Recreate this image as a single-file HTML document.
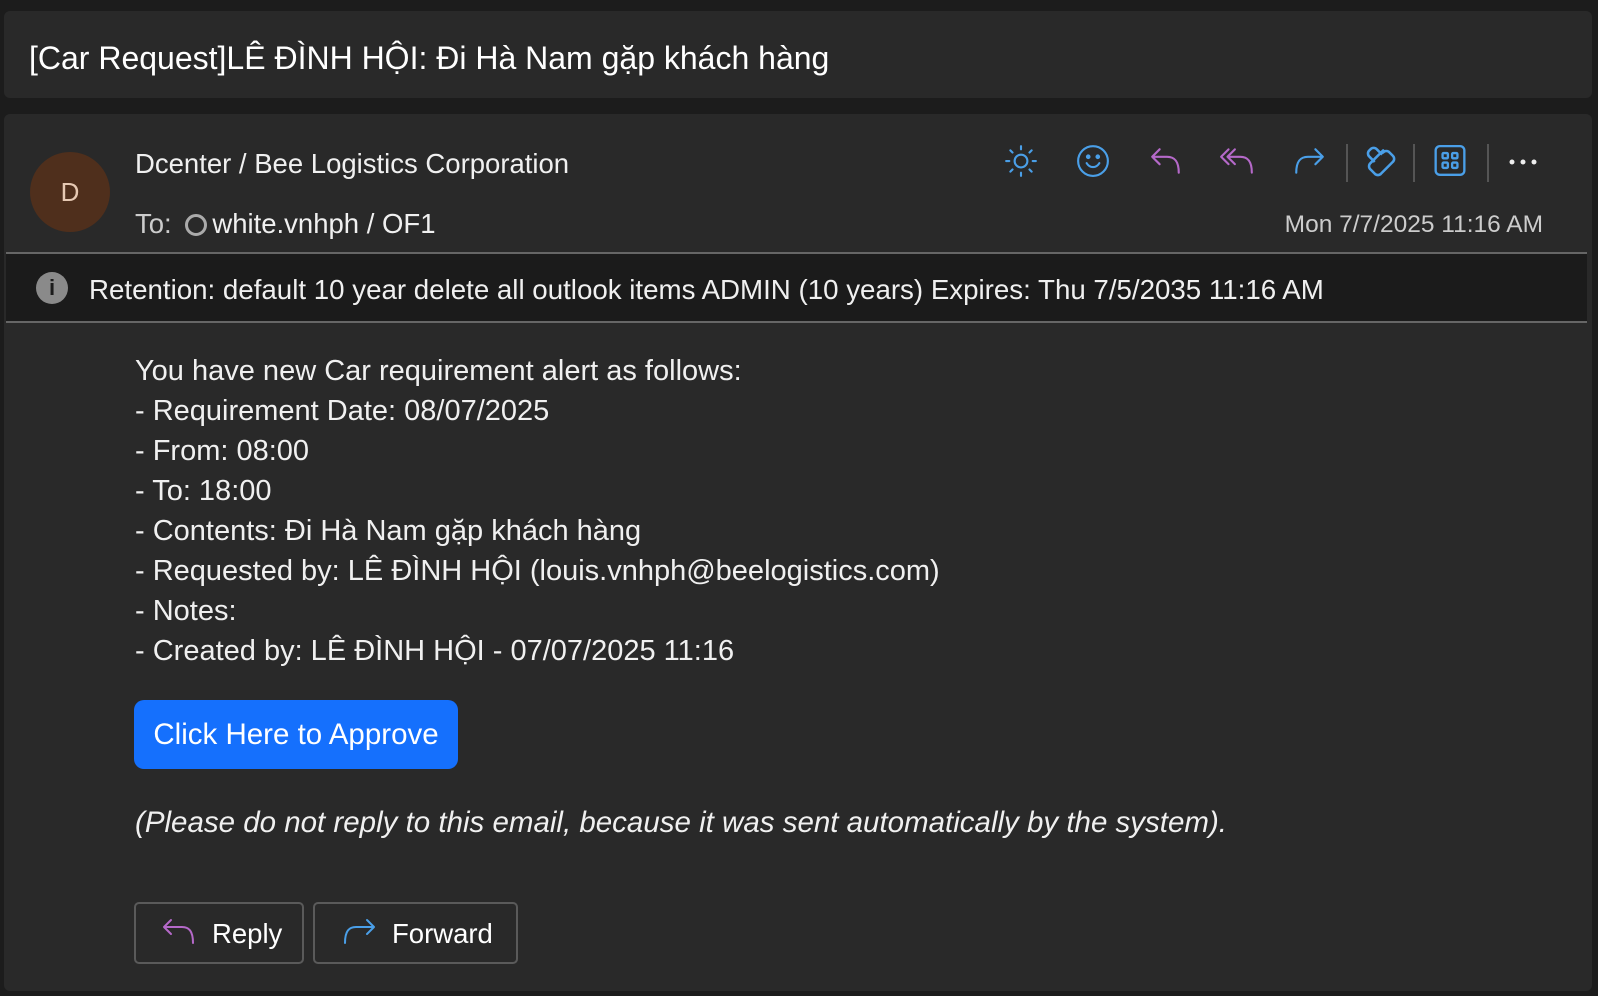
<!DOCTYPE html>
<html><head><meta charset="utf-8"><style>
*{margin:0;padding:0;box-sizing:border-box}
body{width:1598px;height:996px;background:#1c1c1c;font-family:"Liberation Sans",sans-serif;color:#fff;position:relative;overflow:hidden}
.card{position:absolute;background:#292929;border-radius:6px}
.abs{position:absolute;white-space:nowrap}
.ic{position:absolute;top:144px}
</style></head><body>
<div class="card" style="left:4px;top:11px;width:1588px;height:87px"></div>
<div class="abs" style="left:29px;top:38px;font-size:32px;line-height:40px">[Car Request]LÊ ĐÌNH HỘI: Đi Hà Nam gặp khách hàng</div>
<div class="card" style="left:4px;top:114px;width:1588px;height:877px"></div>
<div class="abs" style="left:30px;top:152px;width:80px;height:80px;border-radius:50%;background:#4f2f1c;color:#e6c9b3;font-size:26px;text-align:center;line-height:80px">D</div>
<div class="abs" style="left:135px;top:148px;font-size:27.5px;line-height:32px;color:#f0f0f0">Dcenter / Bee Logistics Corporation</div>
<div class="abs" style="left:135px;top:208px;font-size:27.5px;line-height:32px;color:#ccc">To: <span style="display:inline-block;width:22px;height:22px;border:3px solid #aaa;border-radius:50%;vertical-align:-3px;margin:0 5px 0 6px"></span><span style="color:#f0f0f0">white.vnhph / OF1</span></div>
<div class="abs" style="right:55px;top:211px;font-size:24.5px;line-height:28px;color:#ccc">Mon 7/7/2025 11:16 AM</div>
<svg class="ic" style="left:1004px" width="34" height="34" viewBox="0 0 32 32" fill="none" stroke="#4a9fe8" stroke-width="2" stroke-linecap="round"><circle cx="16" cy="16" r="6"/><path d="M16 2v3M16 27v3M2 16h3M27 16h3M6 6l2 2M24 24l2 2M6 26l2-2M24 8l2-2"/></svg>
<svg class="ic" style="left:1076px" width="34" height="34" viewBox="0 0 32 32" fill="none" stroke="#4a9fe8" stroke-width="2" stroke-linecap="round"><circle cx="16" cy="16" r="14"/><path d="M10 18c3 5 9 5 12 0"/><circle cx="11.5" cy="12" r="1.2" fill="#4a9fe8"/><circle cx="20.5" cy="12" r="1.2" fill="#4a9fe8"/></svg>
<svg class="ic" style="left:1149px" width="34" height="34" viewBox="0 0 32 32" fill="none" stroke="#b569c9" stroke-width="2" stroke-linecap="round" stroke-linejoin="round"><path d="M10 5l-7 7 7 7M3 12h14c7 0 11 4 11 15"/></svg>
<svg class="ic" style="left:1219px" width="36" height="34" viewBox="0 0 34 32" fill="none" stroke="#b569c9" stroke-width="2" stroke-linecap="round" stroke-linejoin="round"><path d="M9 5l-7 7 7 7M15 5l-7 7 7 7M8 12h12c7 0 11 4 11 15"/></svg>
<svg class="ic" style="left:1292px" width="34" height="34" viewBox="0 0 32 32" fill="none" stroke="#4a9fe8" stroke-width="2" stroke-linecap="round" stroke-linejoin="round"><path d="M22 5l7 7-7 7M29 12H15C8 12 4 16 4 27"/></svg>
<div class="abs" style="left:1346px;top:144px;width:2px;height:38px;background:#555"></div>
<svg class="ic" style="left:1362px" width="36" height="36" viewBox="0 0 34 34" fill="none" stroke="#4a9fe8" stroke-width="2.4" stroke-linejoin="round"><path d="M20 6l-12 12a4 4 0 0 0 0 6l4 4a4 4 0 0 0 6 0l11-11a4 4 0 0 0 0-6l-3-3a4 4 0 0 0-6 0zM12 17l-5-5a4 4 0 0 1 0-6l1-1a4 4 0 0 1 6 0l5 5"/></svg>
<div class="abs" style="left:1413px;top:144px;width:2px;height:38px;background:#555"></div>
<svg class="ic" style="left:1434px" width="32" height="34" viewBox="0 0 30 32" fill="none" stroke="#4a9fe8" stroke-width="2.2"><rect x="1.5" y="2" width="27" height="27" rx="4"/><rect x="8" y="8.5" width="5" height="5" rx="1"/><rect x="17" y="8.5" width="5" height="5" rx="1"/><rect x="8" y="17.5" width="5" height="5" rx="1"/><rect x="17" y="17.5" width="5" height="5" rx="1"/></svg>
<div class="abs" style="left:1487px;top:144px;width:2px;height:38px;background:#555"></div>
<svg class="abs" style="left:1509px;top:158px" width="28" height="8" viewBox="0 0 28 8" fill="#eee"><circle cx="3" cy="4" r="2.5"/><circle cx="14" cy="4" r="2.5"/><circle cx="25" cy="4" r="2.5"/></svg>
<div class="abs" style="left:6px;top:252px;width:1581px;height:71px;background:#1b1b1b;border-top:2px solid #666;border-bottom:2px solid #666"></div>
<div class="abs" style="left:36px;top:272px;width:32px;height:32px;border-radius:50%;background:#8a8a8a;color:#1b1b1b;font-weight:bold;font-size:22px;text-align:center;line-height:32px">i</div>
<div class="abs" style="left:89px;top:274px;font-size:27.7px;line-height:32px;color:#f0f0f0">Retention: default 10 year delete all outlook items ADMIN (10 years) Expires: Thu 7/5/2035 11:16 AM</div>
<div class="abs" style="left:135px;top:351px;font-size:29px;line-height:40px;color:#f0f0f0">You have new Car requirement alert as follows:<br>- Requirement Date: 08/07/2025<br>- From: 08:00<br>- To: 18:00<br>- Contents: Đi Hà Nam gặp khách hàng<br>- Requested by: LÊ ĐÌNH HỘI (louis.vnhph@beelogistics.com)<br>- Notes:<br>- Created by: LÊ ĐÌNH HỘI - 07/07/2025 11:16</div>
<div class="abs" style="left:134px;top:700px;width:324px;height:69px;background:#1570fd;border-radius:10px;font-size:29.5px;line-height:69px;text-align:center">Click Here to Approve</div>
<div class="abs" style="left:135px;top:806px;font-size:29.5px;line-height:34px;font-style:italic;color:#f0f0f0">(Please do not reply to this email, because it was sent automatically by the system).</div>
<div class="abs" style="left:134px;top:902px;width:170px;height:62px;border:2px solid #5a5a5a;border-radius:5px"></div>
<svg class="abs" style="left:162px;top:918px" width="34" height="30" viewBox="0 0 34 30" fill="none" stroke="#b569c9" stroke-width="2" stroke-linecap="round" stroke-linejoin="round"><path d="M9 2L2 9l7 7M2 9h18c7 0 11 4 11 16"/></svg>
<div class="abs" style="left:212px;top:917px;font-size:27.5px;line-height:34px">Reply</div>
<div class="abs" style="left:313px;top:902px;width:205px;height:62px;border:2px solid #5a5a5a;border-radius:5px"></div>
<svg class="abs" style="left:342px;top:918px" width="34" height="30" viewBox="0 0 34 30" fill="none" stroke="#4a9fe8" stroke-width="2" stroke-linecap="round" stroke-linejoin="round"><path d="M25 2l7 7-7 7M32 9H14C7 9 3 13 3 25"/></svg>
<div class="abs" style="left:392px;top:917px;font-size:27.5px;line-height:34px">Forward</div>
</body></html>
